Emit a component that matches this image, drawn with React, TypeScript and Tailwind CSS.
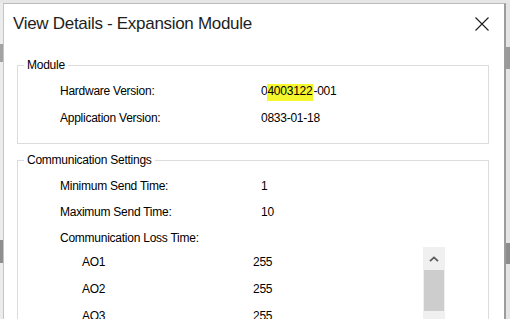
import React from "react";

const font = { fontFamily: '"Segoe UI", "Liberation Sans", Arial, sans-serif' };

function CloseIcon() {
  return (
    <svg width="14" height="14" viewBox="0 0 14 14" className="block">
      <path d="M0.5 0.5 L13.5 13.5 M13.5 0.5 L0.5 13.5" stroke="#1b1b1b" strokeWidth="1.1" fill="none" />
    </svg>
  );
}

function ChevronUp() {
  return (
    <svg width="10" height="6" viewBox="0 0 10 6" className="block">
      <path d="M1 5.2 L5 1.4 L9 5.2" stroke="#5a5a5a" strokeWidth="1.8" fill="none" />
    </svg>
  );
}

type Row = { label: string; value: React.ReactNode };

// Windows-style group box: fieldset + legend sitting on the top border
function Group({ title, children, className = "" }: { title: string; children: React.ReactNode; className?: string }) {
  return (
    <fieldset className={`border border-[#dcdcdc] m-0 p-0 min-w-0 ${className}`}>
      <legend className="ml-[6px] px-[3px] text-[12px] leading-[14px] tracking-[-0.25px] text-black">{title}</legend>
      {children}
    </fieldset>
  );
}

function Rows({ rows }: { rows: Row[] }) {
  return (
    <div className="grid grid-cols-[201px_1fr]">
      {rows.map((r) => (
        <React.Fragment key={r.label}>
          <div className="h-[27px] flex items-center">{r.label}</div>
          <div className="h-[27px] flex items-center">{r.value}</div>
        </React.Fragment>
      ))}
    </div>
  );
}

export default function App() {
  const loss = [
    { name: "AO1", value: 255 },
    { name: "AO2", value: 255 },
    { name: "AO3", value: 255 },
    { name: "AO4", value: 255 },
  ];

  return (
    <div className="w-[510px] h-[319px] overflow-hidden bg-[#e9e9e9] flex flex-col" style={font}>
      <div className="h-[3px] shrink-0 bg-[#e6e6e6]" />
      <div className="flex flex-1 min-h-0">
        {/* background app peeking out on the left */}
        <div className="w-[3px] shrink-0 flex flex-col bg-[#ececec]">
          <div className="h-[41px]" />
          <div className="h-[18px] bg-[#a3a3a3]" />
          <div className="h-[178px]" />
          <div className="h-[23px] bg-[#8f8f8f]" />
        </div>

        {/* dialog */}
        <div className="flex-1 min-w-0 bg-white border-l border-t border-r-2 border-l-[#c4c4c4] border-t-[#bcbcbc] border-r-[#9c9c9c] flex flex-col text-[12px] tracking-[-0.25px] text-black">
          <div className="h-[40px] shrink-0 flex items-center justify-between pl-[9px] pr-[15px]">
            <span className="text-[17px] tracking-[-0.3px] text-[#1e1e1e]">View Details - Expansion Module</span>
            <CloseIcon />
          </div>

          <div className="pl-[13px] pr-[15px] flex flex-col">
            <Group title="Module" className="mt-[14px]">
              <div className="pl-[42px] pt-[5px] pb-[12px]">
                <Rows
                  rows={[
                    {
                      label: "Hardware Version:",
                      value: (
                        <span>
                          0<span className="bg-[#f6f62c] pb-[3px] pr-[1px]">4003122</span>-001
                        </span>
                      ),
                    },
                    { label: "Application Version:", value: "0833-01-18" },
                  ]}
                />
              </div>
            </Group>

            <Group title="Communication Settings" className="mt-[9px]">
              <div className="pl-[42px] pt-[6px]">
                <div className="grid grid-cols-[201px_1fr]">
                  <div className="h-[26px] flex items-center">Minimum Send Time:</div>
                  <div className="h-[26px] flex items-center">1</div>
                  <div className="h-[26px] flex items-center">Maximum Send Time:</div>
                  <div className="h-[26px] flex items-center">10</div>
                </div>
                <div className="h-[22px] pt-[6px] leading-[14px]">Communication Loss Time:</div>

                {/* loss-time list with its own scrollbar */}
                <div className="ml-[22px] w-[363px] h-[90px] flex">
                  <div className="flex-1 pt-[1px]">
                    {loss.map((l) => (
                      <div key={l.name} className="h-[27px] grid grid-cols-[171px_1fr] items-center">
                        <span>{l.name}</span>
                        <span>{l.value}</span>
                      </div>
                    ))}
                  </div>
                  <div className="w-[22px] shrink-0 flex flex-col bg-[#f0f0f0]">
                    <div className="h-[23px] flex items-center justify-center">
                      <ChevronUp />
                    </div>
                    <div className="h-[41px] mx-[1px] bg-[#cdcdcd]" />
                  </div>
                </div>
              </div>
            </Group>
          </div>
        </div>

        {/* background app peeking out on the right */}
        <div className="w-[4px] shrink-0 flex flex-col bg-[#e4e4e4]">
          <div className="h-[44px]" />
          <div className="h-[22px] bg-[#9a9a9a]" />
          <div className="h-[174px]" />
          <div className="h-[21px] bg-[#8c8c8c]" />
        </div>
      </div>
    </div>
  );
}
